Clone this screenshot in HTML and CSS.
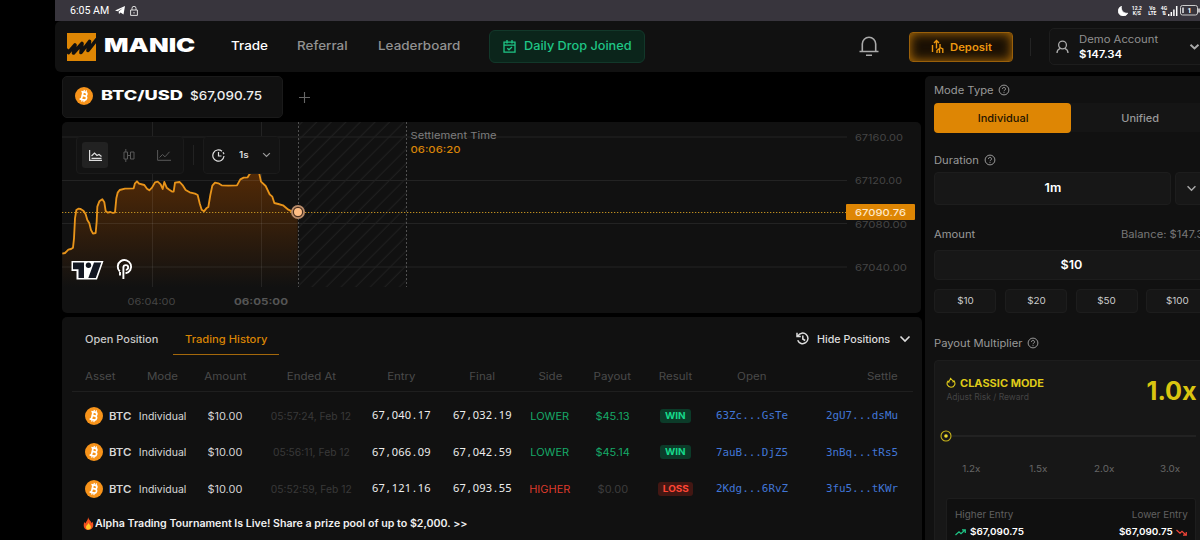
FILE: index.html
```html
<!DOCTYPE html>
<html lang="en">
<head>
<meta charset="utf-8">
<title>Manic Trade</title>
<link rel="stylesheet" href="styles.css">
</head>
<body>
<svg class="defs" aria-hidden="true">
  <symbol id="btc" viewBox="0 0 18 18"><circle cx="9" cy="9" r="9" fill="#f7931a"/><g transform="rotate(13 9 9)" fill="none" stroke="#fff" stroke-width="1.7"><path d="M5.4 5.2H9.6a1.8 1.8 0 0 1 0 3.6H7.2M9.6 8.8H10a2 2 0 0 1 0 4H5.4M7.2 5v8"/><path d="M8 3v2M10.2 3v2M8 13v2M10.2 13v2" stroke-width="1.2"/></g></symbol>
  <symbol id="help" viewBox="0 0 12 12"><g fill="none" stroke="#999" stroke-width="1"><circle cx="6" cy="6" r="4.9"/><path d="M4.5 4.9a1.5 1.5 0 1 1 2.3 1.2C6.2 6.500 6 6.700 6 7.200M6 8.200v.9"/></g></symbol>
  <symbol id="down" viewBox="0 0 12 8"><path d="M1.500 1.500 6 6l4.500-4.500" fill="none" stroke="currentColor" stroke-width="1.600"/></symbol>
</svg>
<div class="screen">
  <div class="status">
    <span class="clock">6:05 AM</span>
    <svg class="plane" width="10" height="9" viewBox="0 0 10 9"><path d="M0 4.500 10 0 8.500 8.500 5.500 6.600 4 8 3.600 5.600 8 2 2.600 5.200Z" fill="#fff"/></svg>
    <svg class="lock" width="8" height="10" viewBox="0 0 8 10"><path d="M.6 4h6.800v5.400H.6ZM2 4V2.300a2 2 0 0 1 4 0V4M4 6v1.500" fill="none" stroke="#ddd" stroke-width="1"/></svg>
    <div class="sys">
      <svg width="10" height="10" viewBox="0 0 10 10"><path d="M3.500 .3A5 5 0 1 0 9.700 7.200 5.500 5.500 0 0 1 3.500 .3Z" fill="#fff" stroke="#fff" stroke-width=".8"/></svg>
      <span class="tiny net">12.2<br>K/S</span>
      <span class="tiny volte">Vo<br>LTE</span>
      <span class="tiny g4">4G<br>⇅</span>
      <svg width="10" height="10" viewBox="0 0 10 10"><path d="M.7 10V8M3.300 10V6M5.900 10V3.500M8.700 10V0" stroke="#fff" stroke-width="1.500"/></svg>
      <svg width="20" height="11" viewBox="0 0 20 11"><rect x=".5" y=".5" width="17" height="9.500" rx="2" fill="none" stroke="#ccc"/><path d="M3 2.500v5.500M19 3.500v4" stroke="#fff" stroke-width="1.300"/><text x="7.500" y="8" class="batt">1</text></svg>
    </div>
  </div>

  <header class="header">
    <svg class="logo" width="29" height="28" viewBox="0 0 29 28"><path d="M0 0h29v28H0z" fill="#de8604"/><path d="M-1 16.500 1.500 19.500 8 12 6.500 20 15 10.500 14 19.500 22.500 8.500 21 17.500 30 6" fill="none" stroke="#111" stroke-width="3.600" stroke-linejoin="round"/></svg>
    <div class="brand"><span class="t">MANIC</span></div>
    <nav class="nav">
      <a class="n1 on"><span class="t">Trade</span></a>
      <a class="n2"><span class="t">Referral</span></a>
      <a class="n3"><span class="t">Leaderboard</span></a>
    </nav>
    <div class="drop">
      <svg width="13" height="13" viewBox="0 0 13 13"><path d="M1 2.200h11v10H1ZM1 5.200h11M4 0v3.500M9 0v3.500M4.300 8.200l1.700 1.600 3-2.800" fill="none" stroke="#1fc586" stroke-width="1.300"/></svg>
      <span class="t">Daily Drop Joined</span>
    </div>
    <svg class="bell" width="20" height="21" viewBox="0 0 20 21"><path d="M.5 15.500h19M3.300 15.500V8a6.700 6.700 0 0 1 13.400 0v7.500M7 19.300h6" fill="none" stroke="#aaa" stroke-width="1.600"/></svg>
    <div class="deposit">
      <svg width="13" height="15" viewBox="0 0 13 15"><path d="M1.500 13V6M5.500 9.500V1.500M3 4l2.500-2.500L8 4M6 14V11.500L8.500 9.500V14M9 5v3.500L11.800 10v4" fill="none" stroke="#ec970f" stroke-width="1.400"/></svg>
      <span class="t">Deposit</span>
    </div>
    <i class="sep"></i>
    <div class="account">
      <svg width="13" height="14" viewBox="0 0 13 14"><circle cx="6.500" cy="5" r="3.900" fill="none" stroke="#aaa" stroke-width="1.300"/><path d="M1 13c0-2.500 1.500-4 3.200-4.700M12 13c0-2.500-1.500-4-3.200-4.700" fill="none" stroke="#aaa" stroke-width="1.300"/></svg>
      <div class="acct-text"><div class="muted"><span class="t">Demo Account</span></div><div class="bal"><span class="t">$147.34</span></div></div>
      <svg class="chev" width="11" height="8" viewBox="0 0 11 8"><path d="M1.500 1.800 5.500 5.500 9.500 1.800" fill="none" stroke="currentColor" stroke-width="2"/></svg>
    </div>
  </header>

  <div class="main">
    <div class="left">
      <div class="pairs">
        <div class="pair"><svg width="18" height="18"><use href="#btc"/></svg><b><span class="t">BTC/USD</span></b><span class="price"><span class="t">$67,090.75</span></span></div>
        <svg class="plus" width="11" height="11" viewBox="0 0 11 11"><path d="M5.500 0v11M0 5.500h11" stroke="#666" stroke-width="1.100"/></svg>
      </div>

      <section class="chart">
        <svg class="plot" width="859" height="191" viewBox="0 0 859 191">
          <defs>
            <linearGradient id="area" x1="0" y1="0" x2="0" y2="1"><stop offset="0" stop-color="#532a06"/><stop offset="1" stop-color="#111"/></linearGradient>
            <pattern id="hatch" width="10.300" height="10.300" patternUnits="userSpaceOnUse" patternTransform="rotate(45)"><path d="M5 0v10.300" stroke="#202020" stroke-width="1"/></pattern>
          </defs>
          <g transform="translate(-7 -7) scale(.33333)">
            <path fill="url(#area)" d="M22 416 35 409 40 404 54 398 60 310 64 285 70 281 86 288 97 315 108 345 114 356 122 354 127 275 133 259 142 253 148 262 152 288 158 293 180 292 184 250 188 233 194 225 236 220 246 199 268 210 283 226 300 202 317 208 323 222 328 201 335 218 356 230 360 203 374 201 392 225 428 240 440 284 447 289 460 276 472 212 480 203 500 211 546 211 556 193 578 187 595 168 612 172 618 200 632 213 652 245 658 264 684 271 712 290 728 292V517H22Z"/>
          </g>
          <path d="M0 15H785M0 58.500H785M0 101.500H785M0 145H785M90.500 0V165M199.500 0V165" stroke="#fff" stroke-opacity=".08" fill="none"/>
          <rect x="236" y="0" width="109" height="165" fill="url(#hatch)"/>
          <path d="M236.500 0V165M344.500 0V165" stroke="#505050" stroke-dasharray="2 2"/>
          <path d="M0 90.500H784" stroke="#be8e20" stroke-dasharray="1.300 1.700"/>
          <g transform="translate(-7 -7) scale(.33333)">
            <path fill="none" stroke="#e8941a" stroke-width="5.500" stroke-linejoin="round" d="M22 416 30 414 35 409 40 404 48 402 54 398 57 370 60 310 64 285 70 281 77 282 86 288 92 298 97 315 103 325 108 345 114 356 122 354 125 320 127 275 133 259 142 253 148 262 152 288 158 293 166 291 174 294 180 292 184 250 188 233 194 225 210 221 236 220 240 205 246 199 252 206 268 210 276 221 283 226 291 218 300 202 308 200 317 208 323 222 328 201 335 218 343 224 352 230 356 230 360 203 374 201 384 212 392 225 404 232 420 236 428 240 434 265 440 284 447 289 454 280 460 276 466 240 472 212 480 203 490 205 500 211 520 212 546 211 556 193 566 188 578 187 584 177 595 168 612 172 618 200 632 213 644 238 652 245 658 264 670 267 684 271 700 284 712 290 728 292"/>
          </g>
          <circle cx="236" cy="90" r="7" fill="#b98c6b"/><circle cx="236" cy="90" r="4.600" fill="#ffbe85" stroke="#4a3020" stroke-width="1.200"/>
          <g class="axis" fill="#454545">
            <text x="793" y="18.500" textLength="48" lengthAdjust="spacingAndGlyphs">67160.00</text>
            <text x="793" y="62" textLength="47" lengthAdjust="spacingAndGlyphs">67120.00</text>
            <text x="793" y="105.500" textLength="52" lengthAdjust="spacingAndGlyphs">67080.00</text>
            <text x="793" y="149" textLength="52" lengthAdjust="spacingAndGlyphs">67040.00</text>
            <text x="65.500" y="182.500" textLength="48" lengthAdjust="spacingAndGlyphs">06:04:00</text>
            <text x="172" y="182.500" textLength="54" lengthAdjust="spacingAndGlyphs" font-weight="700" fill="#555">06:05:00</text>
            <text x="348.500" y="17" textLength="86" lengthAdjust="spacingAndGlyphs" fill="#7d7d7d">Settlement Time</text>
            <text x="348.500" y="31" textLength="50" lengthAdjust="spacingAndGlyphs" fill="#d88408" font-weight="500">06:06:20</text>
            <rect x="784" y="82" width="69" height="16" rx="1" fill="#de8604"/>
            <text x="793" y="93.500" textLength="51" lengthAdjust="spacingAndGlyphs" fill="#ffe9c8" font-weight="500">67090.76</text>
          </g>
          <path d="M9.500 139H41.500L35 157.500H14.500V149H9.500Z" fill="#fff"/>
          <path d="M11 140.600H22V156H16.500V147.300H11ZM32 140.600H39.300L33.800 156H26.300Z" fill="#131722"/><circle cx="26.500" cy="143.300" r="2.700" fill="#131722"/>
          <path d="M57.800 149.500A6.700 6.700 0 1 1 63.500 151.300M61.400 157V145.500a2.400 2.400 0 1 1 2.400 2.400M58 150v3.500" fill="none" stroke="#fff" stroke-width="1.900"/>
        </svg>
        <div class="tools">
          <div class="toolbox types">
            <span class="active"><svg width="13" height="11" viewBox="0 0 13 11"><path d="M.6 0v10.300H13M2.500 6l3-3 2.500 2.500 2-1 2.500 2M2.500 8.300h10" fill="none" stroke="#ddd" stroke-width="1.200"/></svg></span>
            <svg width="12" height="13" viewBox="0 0 12 13"><path d="M1 3h3.500v7H1ZM7.500 3H11v7H7.500ZM2.800 0v3M2.800 10v3M4.500 6.500h3" fill="none" stroke="#595959"/></svg>
            <svg width="14" height="11" viewBox="0 0 14 11"><path d="M.6 0v10.300H14M2.500 7.500l3-3L8 6.800l4.500-5" fill="none" stroke="#595959"/></svg>
          </div>
          <i class="tsep"></i>
          <div class="toolbox interval">
            <svg width="13" height="13" viewBox="0 0 13 13"><path d="M10 2.200A5.600 5.600 0 1 0 12 7M6.500 3v4H9.500M11 3.300l1 1.800" fill="none" stroke="#ddd" stroke-width="1.200"/></svg>
            <span class="one"><span class="t">1s</span></span>
            <svg class="dim" width="9" height="6" viewBox="0 0 12 8"><use href="#down"/></svg>
          </div>
        </div>
      </section>

      <section class="positions">
        <div class="tabs">
          <div class="tab"><span class="t">Open Position</span></div>
          <div class="tab sel"><span class="t">Trading History</span></div>
          <div class="hide">
            <svg width="13" height="13" viewBox="0 0 13 13"><path d="M2 3.800a5.300 5.300 0 1 1-.3 4.500M1 .8v3.700h3.800M6.800 3.500V7l2.400 1.500" fill="none" stroke="#ddd" stroke-width="1.500"/></svg>
            <span class="hide-label"><span class="t">Hide Positions</span></span>
            <svg width="12" height="8"><use href="#down"/></svg>
          </div>
        </div>
        <div class="row head">
          <div><span class="t">Asset</span></div><div><span class="t">Mode</span></div><div><span class="t">Amount</span></div><div><span class="t">Ended At</span></div><div><span class="t">Entry</span></div><div><span class="t">Final</span></div><div><span class="t">Side</span></div><div><span class="t">Payout</span></div><div><span class="t">Result</span></div><div><span class="t">Open</span></div><div><span class="t">Settle</span></div>
        </div>
        <div class="row">
          <div class="asset"><svg width="18" height="18"><use href="#btc"/></svg><span class="t">BTC</span></div><div class="kind"><span class="t">Individual</span></div><div><span class="t">$10.00</span></div><div class="date"><span class="t">05:57:24, Feb 12</span></div><div class="num">67<i>,</i>040<i>.</i>17</div><div class="num">67<i>,</i>032<i>.</i>19</div><div class="up side"><span class="t">LOWER</span></div><div class="up pay"><span class="t">$45.13</span></div><div><span class="badge win"><span class="t">WIN</span></span></div><div class="hash">63Zc...GsTe</div><div class="hash">2gU7...dsMu</div>
        </div>
        <div class="row">
          <div class="asset"><svg width="18" height="18"><use href="#btc"/></svg><span class="t">BTC</span></div><div class="kind"><span class="t">Individual</span></div><div><span class="t">$10.00</span></div><div class="date"><span class="t">05:56:11, Feb 12</span></div><div class="num">67<i>,</i>066<i>.</i>09</div><div class="num">67<i>,</i>042<i>.</i>59</div><div class="up side"><span class="t">LOWER</span></div><div class="up pay"><span class="t">$45.14</span></div><div><span class="badge win"><span class="t">WIN</span></span></div><div class="hash">7auB...DjZ5</div><div class="hash">3nBq...tRs5</div>
        </div>
        <div class="row">
          <div class="asset"><svg width="18" height="18"><use href="#btc"/></svg><span class="t">BTC</span></div><div class="kind"><span class="t">Individual</span></div><div><span class="t">$10.00</span></div><div class="date"><span class="t">05:52:59, Feb 12</span></div><div class="num">67<i>,</i>121<i>.</i>16</div><div class="num">67<i>,</i>093<i>.</i>55</div><div class="down side"><span class="t">HIGHER</span></div><div class="none pay"><span class="t">$0.00</span></div><div><span class="badge loss"><span class="t">LOSS</span></span></div><div class="hash">2Kdg...6RvZ</div><div class="hash">3fu5...tKWr</div>
        </div>
        <div class="promo"><svg width="11" height="13" viewBox="0 0 11 13"><path d="M5 0c.5 3 3 3.500 3.500 6l1-1.200C11.500 9 9.500 13 5.500 13 1.500 13-.5 9 1.500 5l1 1.500C3 4 5.500 3 5 0Z" fill="#f4511e"/><path d="M5.600 5.500c0 2 2.400 2.600 2.400 4.700A2.500 2.500 0 0 1 3 10c0-2 2.600-2.500 2.600-4.500Z" fill="#ffca28"/></svg><span class="t">Alpha Trading Tournament Is Live! Share a prize pool of up to $2,000. &gt;&gt;</span></div>
      </section>
    </div>

    <aside class="panel">
      <div class="label mode"><span class="t">Mode Type</span><svg width="12" height="12"><use href="#help"/></svg></div>
      <div class="toggle"><div class="picked"><span class="t">Individual</span></div><div><span class="t">Unified</span></div></div>
      <div class="label dur"><span class="t">Duration</span><svg width="12" height="12"><use href="#help"/></svg></div>
      <div class="duration"><div class="field"><span class="t">1m</span></div><div class="field pick"><svg width="11" height="7" viewBox="0 0 12 8"><use href="#down"/></svg></div></div>
      <div class="label amt"><span class="t">Amount</span><span class="balance"><span class="t">Balance: $147.34</span></span></div>
      <div class="field amount"><span class="t">$10</span></div>
      <div class="quick"><div><span class="t">$10</span></div><div><span class="t">$20</span></div><div><span class="t">$50</span></div><div><span class="t">$100</span></div></div>
      <div class="label mult"><span class="t">Payout Multiplier</span><svg width="12" height="12"><use href="#help"/></svg></div>
      <div class="card">
        <div class="classic">
          <div>
            <div class="cname"><svg width="10" height="11" viewBox="0 0 10 11"><path d="M4.500.8C5 3 7 2.800 7.200 4.700L8 3.900C10 6.500 8.500 10.200 5 10.200S0 6.500 2 4.200l.8 1C3 3.300 4.800 2.800 4.500.8Z" fill="none" stroke="#dfca19" stroke-width="1.100"/></svg><span class="t">CLASSIC MODE</span></div>
            <div class="adjust"><span class="t">Adjust Risk / Reward</span></div>
          </div>
          <div class="big"><span class="t">1.0x</span></div>
        </div>
        <div class="slider"><svg width="12" height="12" viewBox="0 0 12 12"><circle cx="6" cy="6" r="5" fill="#171717" stroke="#c8b41c" stroke-width="1.100"/><circle cx="6" cy="6" r="1.800" fill="#eedb2e"/></svg><i></i></div>
        <div class="ticks"><div><span class="t">1.2x</span></div><div><span class="t">1.5x</span></div><div><span class="t">2.0x</span></div><div><span class="t">3.0x</span></div></div>
        <div class="entries">
          <div class="enames"><span class="t">Higher Entry</span><span class="t r">Lower Entry</span></div>
          <div class="evals"><svg width="11" height="7" viewBox="0 0 11 7"><path d="M.5 6 4 2.800 6 4.700 10 1M7 .8h3.300V4" fill="none" stroke="#1fc586" stroke-width="1.200"/></svg><span class="t">$67,090.75</span><span class="t r">$67,090.75</span><svg width="11" height="7" viewBox="0 0 11 7"><path d="M.5 1 4 4.200 6 2.300 10 6M7 6.200h3.300V3" fill="none" stroke="#f04438" stroke-width="1.200"/></svg></div>
        </div>
      </div>
    </aside>
  </div>
</div>
</body>
</html>
```
FILE: styles.css
```css
* { box-sizing: border-box; }
body { margin: 0; background: #000; color: #ddd; font: 10px/1.2 Inter, "Liberation Sans", sans-serif; overflow: hidden; }
svg { display: block; flex: none; }
.defs { display: none; }
.screen { width: 1153px; height: 540px; margin-left: 55px; overflow: hidden; }
/* Wide letterforms: the label is stretched horizontally */
.t { display: inline-block; white-space: nowrap; transform: scaleX(var(--sx, 1.1)); transform-origin: left center; }
.t.r { transform-origin: right center; }

.status { height: 21px; width: 1145px; background: #38353d; display: flex; align-items: center; padding-left: 15px; color: #fff; }
.clock { font: 10.600px/20px Roboto, sans-serif; width: 45px; }
.lock { margin-left: 5px; }
.sys { display: flex; align-items: center; margin-left: auto; width: 82px; height: 18px; }
.tiny { font: 700 5px/5px Roboto, sans-serif; text-align: center; margin-left: 3px; }
.net { width: 13px; }
.volte { width: 10px; margin-left: 5px; }
.g4 { width: 9px; }
.sys svg + svg { margin-left: 2px; }
.batt { font: 700 7px Roboto, sans-serif; fill: #fff; }

.header { height: 51px; background: #111; border-radius: 6px 0 0 6px; display: flex; align-items: center; padding-left: 12px; white-space: nowrap; }
.header > * { flex: none; }
.brand { width: 126.500px; margin-left: 8px; font-size: 19px; font-weight: 900; color: #fff; --sx: 1.35; }
.nav { display: flex; font-size: 12px; font-weight: 500; color: #929292; --sx: 1.12; }
.nav .on { color: #fff; }
.n1 { width: 66px; } .n2 { width: 81px; } .n3 { width: 111px; }
.drop { width: 156px; height: 33px; border: 1px solid #12382a; border-radius: 6px; background: #0b251b; color: #1fc586; display: flex; align-items: center; gap: 8px; padding: 0 0 1px 13px; font-size: 12px; font-weight: 500; --sx: 1.06; }
.bell { margin-left: 214px; }
.deposit { margin-left: 30px; width: 104px; height: 30px; border-radius: 4px; border: 1px solid #9a600a; background: #1a1004; box-shadow: inset 0 0 11px #b47008; display: flex; align-items: center; gap: 6px; padding-left: 21px; color: #ec970f; font-size: 10px; font-weight: 600; --sx: 1.13; }
.sep { width: 1px; height: 18px; background: #242424; margin-left: 17px; }
.account { margin-left: 18px; width: 159px; height: 37px; border: 1px solid #1d1d1d; border-radius: 5px; background: #131313; display: flex; align-items: center; padding-left: 6px; }
.acct-text { width: 110px; margin-left: 10px; padding-top: 1px; }
.muted { font-size: 10px; line-height: 15px; color: #909090; --sx: 1.13; }
.bal { font-size: 10px; line-height: 15px; color: #fff; font-weight: 600; --sx: 1.14; }
.chev { color: #aaa; }

.main { display: flex; gap: 4px; padding: 4px 0 0 7px; }
.left { width: 859px; }
.pairs { display: flex; align-items: center; }
.pair { width: 221px; height: 42px; background: #111; border: 1px solid #1a1a1a; border-radius: 5px; display: flex; align-items: center; padding: 0 0 2px 12px; }
.pair b { width: 89px; margin-left: 7.500px; font-size: 13px; font-weight: 800; color: #fff; --sx: 1.4; }
.price { font-size: 12px; font-weight: 500; color: #eee; --sx: 1.12; }
.plus { margin-left: 16px; }

.chart { position: relative; margin-top: 4px; height: 191px; background: #111; border-radius: 5px; overflow: hidden; }
.axis { font: 9.500px Inter, sans-serif; }
.tools { position: absolute; left: 14px; top: 14px; display: flex; align-items: center; }
.toolbox { height: 38px; background: #131313; border: 1px solid #1b1b1b; border-radius: 4px; display: flex; align-items: center; }
.types { width: 108px; padding-left: 5px; gap: 15px; }
.types .active { width: 26px; height: 26px; display: grid; place-items: center; background: #222; border-radius: 3px; }
.types svg + svg { margin-left: 7px; }
.tsep { width: 1px; height: 20px; margin: 0 9px; background: #222; }
.interval { width: 77px; padding-left: 8px; color: #ddd; }
.one { width: 23px; margin-left: 14px; font-size: 9px; font-weight: 600; }
.dim { color: #999; }

.positions { margin-top: 4px; height: 223px; background: #111; border-radius: 5px 5px 0 0; padding: 5px 9px 0 10px; width: 860px; }
.tabs { display: flex; height: 33px; }
.tab { width: 101px; padding: 11px 0 0 13px; font-weight: 500; color: #c9c9c9; }
.tab.sel { width: 106px; padding-left: 11.500px; color: #d98404; border-bottom: 1px solid #a4680b; --sx: 1.12; }
.hide { display: flex; align-items: center; margin-left: auto; color: #ddd; font-weight: 500; margin-right: 2px; }
.hide-label { width: 82px; margin-left: 8px; --sx: 1.07; }
.row { display: grid; grid-template-columns: 48px 58px 68px 104px 77px 85px 50px 75px 51px 102px 95px; align-items: center; height: 36.500px; padding-left: 13px; text-align: center; white-space: nowrap; color: #d6d6d6; }
.row .t { transform-origin: center; }
.row > :first-child { text-align: left; }
.row > :first-child .t { transform-origin: left center; }
.row > :last-child { text-align: right; }
.row > :last-child .t { transform-origin: right center; }
.row.head { height: 37px; border-bottom: 1px solid #1f1f1f; color: #4a4a4a; padding-top: 5px; margin-bottom: 5.400px; --sx: 1.15; }
.asset { display: flex; align-items: center; gap: 6px; font-weight: 600; --sx: 1.14; }
.kind { padding-left: 2px; --sx: 1.05; }
.date { color: #393939; --sx: 1.03; }
.num { font: 11px "Noto Sans", sans-serif; letter-spacing: .25px; color: #eee; padding-bottom: 2px; }
.num i { display: inline-block; width: 6.500px; font-style: normal; text-align: center; }
.up { color: #16a968; }
.down { color: #dc3a2c; }
.none { color: #3d3d3d; }
.badge { display: inline-block; padding: 0 6px; height: 14px; line-height: 14px; border-radius: 3px; font-size: 9px; font-weight: 700; }
.win { background: #0c3b29; color: #16d98c; }
.loss { background: #431713; color: #ff4635; }
.hash { font: 10.900px "DejaVu Sans Mono", monospace; color: #4176d6; }
.promo { display: flex; align-items: center; gap: 1px; margin: 10px 0 0 11px; color: #f0f0f0; font-weight: 600; --sx: 1.064; }

.panel { width: 283px; height: 464px; flex: none; background: #111; border-radius: 5px 0 0 0; padding: 6px 0 0 9.400px; white-space: nowrap; }
.label { height: 16px; display: flex; align-items: center; color: #999; --sx: 1.12; }
.mode svg { margin-left: 10px; } .dur svg { margin-left: 9px; } .mult svg { margin-left: 14px; }
.toggle { margin-top: 5px; width: 274px; height: 29px; display: grid; grid-template-columns: 137px 137px; border-radius: 4px; background: #151515; line-height: 30px; text-align: center; color: #999; font-weight: 500; }
.picked { background: #de8604; border-radius: 4px; color: #231400; }
.toggle .t, .field .t, .quick .t, .ticks .t { transform-origin: center; }
.dur { margin-top: 20px; }
.duration { display: flex; gap: 4px; margin-top: 4px; }
.field { width: 237px; height: 33px; background: #171717; border: 1px solid #1d1d1d; border-radius: 4px; display: grid; place-items: center; color: #fff; font-size: 12px; font-weight: 600; --sx: 1.05; }
.pick { width: 33px; color: #aaa; }
.amt { margin-top: 21px; }
.balance { margin-left: auto; width: 87px; color: #777; }
.amount { width: 274px; height: 30px; margin-top: 8px; }
.quick { width: 274px; display: grid; grid-template-columns: repeat(4, 62px); justify-content: space-between; margin-top: 9px; color: #ccc; font-size: 9px; }
.quick div { height: 24px; line-height: 22px; text-align: center; background: #161616; border: 1px solid #1d1d1d; border-radius: 4px; }
.mult { margin-top: 22px; }
.card { width: 274px; height: 190px; margin-top: 9px; padding: 15px 11px; background: #171717; border: 1px solid #1d1d1d; border-radius: 4px; }
.classic { display: flex; justify-content: space-between; height: 33px; }
.cname { display: flex; align-items: center; gap: 4px; color: #dfca19; font-weight: 700; height: 13px; }
.adjust { color: #444; font-size: 8.500px; margin-top: 3px; --sx: 1; }
.big { color: #dac510; font-size: 25px; font-weight: 700; line-height: 31px; --sx: 1.01; }
.big .t { transform-origin: right center; }
.slider { display: flex; align-items: center; margin: 21px 0 0 -6px; height: 12px; }
.slider i { flex: 1; height: 2px; background: #222; }
.ticks { display: grid; grid-template-columns: repeat(4, 66.300px); width: 266px; margin: 21px 0 0 -8px; text-align: center; color: #666; font-size: 9px; line-height: 12px; }
.entries { margin-top: 23px; height: 70px; background: #101010; border: 1px solid #1d1d1d; border-radius: 3px; padding: 9px 8px; font-size: 9.500px; --sx: 1.04; }
.enames, .evals { display: flex; align-items: center; height: 14px; color: #606060; }
.evals { height: 20px; color: #fff; font-weight: 600; gap: 4px; }
.r { margin-left: auto; }
```
